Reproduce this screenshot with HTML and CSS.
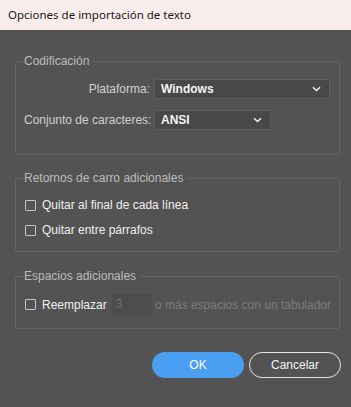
FILE: index.html
```html
<!DOCTYPE html>
<html lang="es">
<head>
<meta charset="utf-8">
<title>Opciones de importación de texto</title>
<link rel="stylesheet" href="styles.css">
</head>
<body>
<div class="window">
  <div class="titlebar">Opciones de importación de texto</div>
  <div class="content">
    <fieldset class="group group-enc">
      <legend>Codificación</legend>
      <div class="form-grid">
        <label class="field-label">Plataforma:</label>
        <div class="select select-wide"><span class="select-value">Windows</span><svg class="chev" width="9" height="6" viewBox="0 0 9 6"><path d="M1 1.2 L4.5 4.5 L8 1.2" fill="none" stroke="#f2f2f2" stroke-width="1.5"/></svg></div>
        <label class="field-label">Conjunto de caracteres:</label>
        <div class="select select-narrow"><span class="select-value">ANSI</span><svg class="chev" width="9" height="6" viewBox="0 0 9 6"><path d="M1 1.2 L4.5 4.5 L8 1.2" fill="none" stroke="#f2f2f2" stroke-width="1.5"/></svg></div>
      </div>
    </fieldset>

    <fieldset class="group group-ret">
      <legend>Retornos de carro adicionales</legend>
      <div class="check-list">
        <label class="check-row"><span class="box"></span><span>Quitar al final de cada línea</span></label>
        <label class="check-row"><span class="box"></span><span>Quitar entre párrafos</span></label>
      </div>
    </fieldset>

    <fieldset class="group group-spc">
      <legend>Espacios adicionales</legend>
      <div class="replace-row">
        <label class="check-row"><span class="box"></span><span>Reemplazar</span></label>
        <div class="num-input">3</div>
        <span class="dim">o más espacios con un tabulador</span>
      </div>
    </fieldset>

    <div class="buttons">
      <button class="btn btn-primary">OK</button>
      <button class="btn btn-secondary">Cancelar</button>
    </div>
  </div>
</div>
</body>
</html>
```

FILE: styles.css
```css
html, body {
  margin: 0;
  padding: 0;
  background: #535353;
}
.window {
  width: 351px;
  height: 407px;
  background: #535353;
  font-family: "Liberation Sans", Arial, sans-serif;
  font-size: 12px;
  color: #eeeeee;
}
.titlebar {
  height: 30px;
  box-sizing: border-box;
  background: #f9eeeb;
  color: #1a1a1a;
  font-family: "Noto Sans", "Open Sans", sans-serif;
  font-size: 11.5px;
  padding-left: 8px;
  display: flex;
  align-items: center;
  padding-bottom: 1px;
}
.content {
  padding-top: 24px;
}
.group {
  margin: 0 11px 0 15px;
  border: 1px solid #636363;
  border-radius: 2px;
  padding: 0 8px;
  min-width: 0;
}
.group legend {
  padding: 0 4px 0 0;
  margin-left: 0;
  line-height: 14px;
  height: 14px;
  color: #bcbcbc;
  font-size: 12px;
}
.group-enc {
  padding-top: 11px;
  padding-bottom: 24px;
}
.group-ret {
  margin-top: 16px;
  padding-top: 10px;
  padding-bottom: 11px;
}
.group-spc {
  margin-top: 17px;
  padding-top: 11px;
  padding-bottom: 13px;
}
.form-grid {
  display: grid;
  grid-template-columns: 126px auto;
  column-gap: 4px;
  row-gap: 11px;
  align-items: center;
}
.field-label {
  text-align: right;
  color: #d0d0d0;
  white-space: nowrap;
}
.select {
  height: 20px;
  box-sizing: border-box;
  background: #484848;
  border: 1px solid #5f5f5f;
  border-radius: 2px;
  display: flex;
  align-items: center;
  justify-content: space-between;
  padding: 0 8px 0 6px;
}
.select-wide { width: 176px; }
.select-narrow { width: 117px; }
.select-value {
  color: #f4f4f4;
  font-weight: bold;
}
.chev { display: block; }
.check-list {
  display: flex;
  flex-direction: column;
  gap: 5px;
}
.check-row {
  display: flex;
  align-items: center;
  gap: 6px;
  height: 20px;
  padding-left: 1px;
  color: #f0f0f0;
  white-space: nowrap;
}
.box {
  width: 11px;
  height: 11px;
  box-sizing: border-box;
  border: 1px solid #c4c4c4;
  border-radius: 1px;
}
.replace-row {
  display: flex;
  align-items: center;
  white-space: nowrap;
}
.num-input {
  width: 45px;
  height: 21px;
  box-sizing: border-box;
  margin-left: 5px;
  background: #4d4d4d;
  color: #6e6e6e;
  padding-left: 4px;
  line-height: 21px;
}
.dim {
  margin-left: 3px;
  color: #7c7c7c;
}
.buttons {
  display: flex;
  justify-content: flex-end;
  gap: 5px;
  margin-top: 23px;
  padding-right: 10px;
}
.btn {
  height: 26px;
  width: 92px;
  border-radius: 13px;
  font-family: "Liberation Sans", Arial, sans-serif;
  font-size: 12px;
  padding: 0;
}
.btn-primary {
  background: #4b9ff3;
  border: none;
  color: #ffffff;
}
.btn-secondary {
  background: transparent;
  border: 1px solid #e6e6e6;
  color: #f2f2f2;
}
```
